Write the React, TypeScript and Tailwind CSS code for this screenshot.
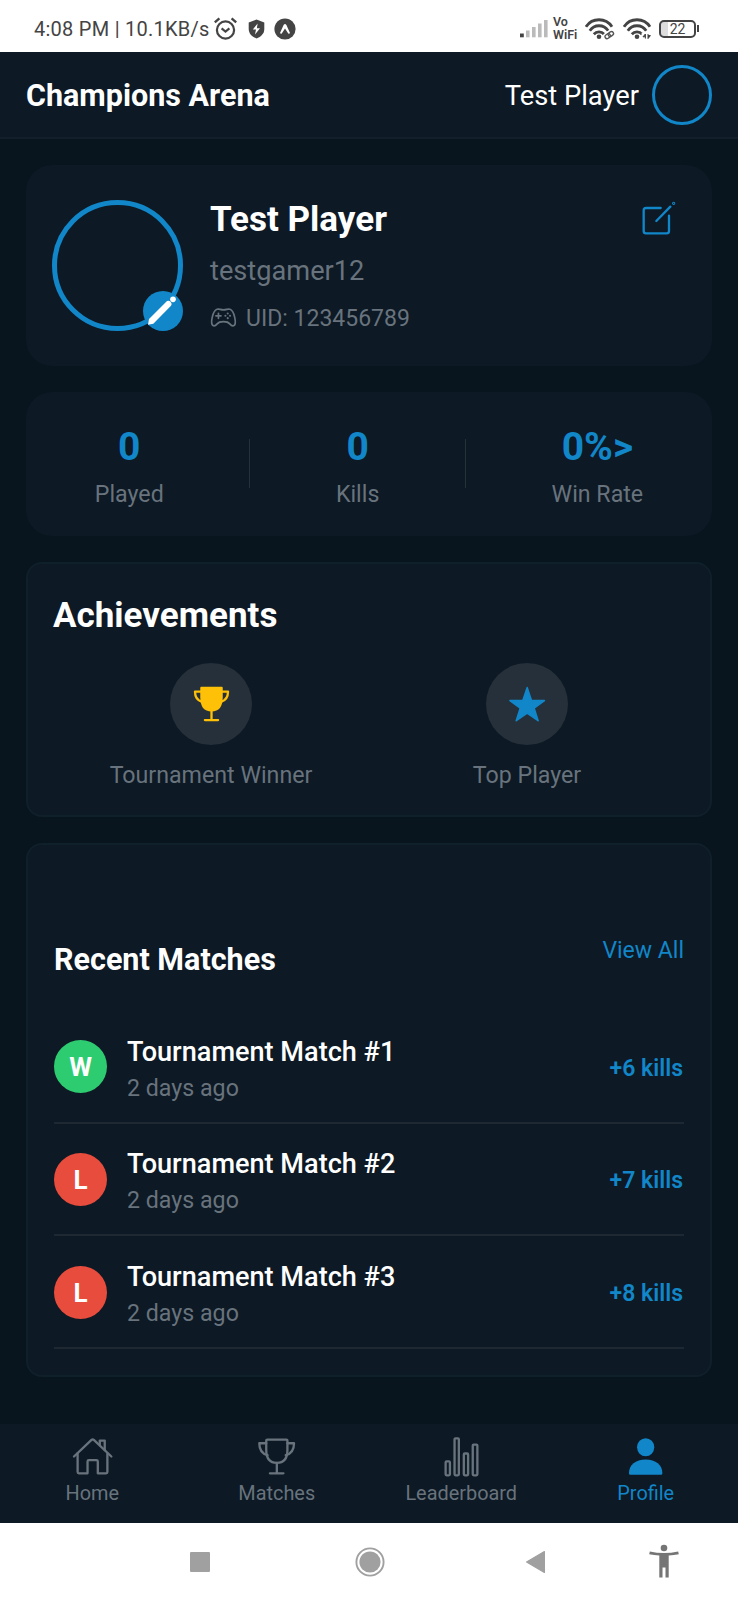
import React from "react";
import { IoGameControllerOutline } from "react-icons/io5";

const matches = [
  { id: 1, won: true, kills: 6 },
  { id: 2, won: false, kills: 7 },
  { id: 3, won: false, kills: 8 },
];

function WifiArcs() {
  return (
    <g>
      <g fill="none" stroke="#444" strokeWidth="2.8">
        <path d="M1 8.8 A15.5 15.5 0 0 1 27 8.8" />
        <path d="M4.8 12.7 A11 11 0 0 1 23.2 12.7" />
        <path d="M8.8 16.2 A7 7 0 0 1 19.2 16.2" />
      </g>
      <circle cx="14" cy="18.8" r="2.3" fill="#444" />
    </g>
  );
}

function StatusBar() {
  return (
    <div className="flex h-[52px] items-center bg-white pt-[5px] pl-[34px] text-[#444]">
      <span className="w-[180px] whitespace-nowrap text-[20px] leading-6 tracking-[0.26px]">
        4:08 PM | 10.1KB/s
      </span>
      <svg className="h-[24px] w-[24px]" viewBox="0 0 24 24" fill="none" stroke="#444" strokeWidth="2.2">
        <circle cx="11.5" cy="13" r="8.6" />
        <path d="M0.8 5.4 L5.4 1.4 M22.2 5.4 L17.6 1.4" strokeWidth="2.4" />
        <path d="M7.6 11.4 L11.5 14.6 L15.4 11.4" />
      </svg>
      <svg className="ml-[10px] h-[20px] w-[17px]" viewBox="0 0 17 20">
        <path d="M8.5 0.6 L16.3 3.4 V10 C16.3 14.6 13 17.8 8.5 19.4 C4 17.8 0.7 14.6 0.7 10 V3.4 Z" fill="#444" />
        <path d="M9.6 4.4 L4.8 10.6 H8 L7 15.6 L12 9.2 H8.9 Z" fill="#fff" />
      </svg>
      <svg className="ml-[9px] h-[22px] w-[22px]" viewBox="0 0 22 22">
        <circle cx="11" cy="11" r="10.6" fill="#444" />
        <path d="M5.9 15.2 L9.6 7 Q11 5 12.4 7 L16.1 15.2 L14.4 15.8 L11 10.4 L7.6 15.8 Z" fill="#fff" />
      </svg>
      <svg className="ml-[223px] h-[20px] w-[30px]" viewBox="0 0 30 20">
        <rect x="1" y="14.5" width="3.8" height="3.8" fill="#444" />
        <rect x="7" y="11.5" width="3.6" height="6.8" fill="#bbb" />
        <rect x="13" y="8" width="3.6" height="10.3" fill="#bbb" />
        <rect x="19" y="4.5" width="3.6" height="13.8" fill="#bbb" />
        <rect x="25" y="1" width="3.6" height="17.3" fill="#bbb" />
      </svg>
      <div className="ml-[4px] flex w-[32px] flex-col gap-[1px] text-[12.5px] leading-[12px] font-semibold">
        <span>Vo</span>
        <span>WiFi</span>
      </div>
      <svg className="h-[22px] w-[30px]" viewBox="0 0 30 22">
        <WifiArcs />
        <rect x="19.2" y="14.6" width="9.6" height="5" rx="2" transform="rotate(-35 24 17)" fill="#fff" stroke="#fff" strokeWidth="3" />
        <g fill="none" stroke="#555" strokeWidth="1.4">
          <rect x="19.5" y="15.2" width="5.6" height="4" rx="2" transform="rotate(-35 24 17)" />
          <rect x="23.3" y="15.2" width="5.6" height="4" rx="2" transform="rotate(-35 24 17)" />
        </g>
      </svg>
      <svg className="ml-[8px] h-[22px] w-[30px]" viewBox="0 0 30 22">
        <WifiArcs />
        <rect x="18.6" y="14.6" width="9" height="8" fill="#fff" />
        <path d="M22.4 20.6 V16 L20 18.8 H22.4 M25 16 V20.6 L27.4 17.6 H25" fill="#444" stroke="#444" strokeWidth="1" />
      </svg>
      <div className="ml-[6px] flex h-[18px] w-[37px] items-center justify-center rounded-[5px] border-2 border-[#444] bg-gradient-to-r from-[#ddd] from-22% to-white to-22% text-[14px] leading-none">
        22
      </div>
      <div className="ml-[1px] h-[7px] w-[2px] bg-[#444]" />
    </div>
  );
}

function PencilIcon() {
  return (
    <svg className="size-full" viewBox="430 423 120 120" fill="#fff">
      <path d="M445 524 L448 507 L502 453 Q507 450 513 455 Q518 461 514 467 L461 521 Z" />
      <circle cx="520" cy="448" r="8.5" />
    </svg>
  );
}

function EditIcon() {
  return (
    <svg
      className="mt-[34px] mr-[8px] size-[38px] self-start"
      viewBox="420 145 114 114"
      fill="none"
      stroke="#1186c8"
      strokeWidth="7"
      strokeLinecap="round"
    >
      <path d="M482 172 H438 Q431 172 431 179 V241 Q431 248 438 248 H500 Q507 248 507 241 V195" />
      <path d="M469 211 L511 168" />
      <circle cx="521" cy="158" r="1.5" />
    </svg>
  );
}

function TrophyBadge() {
  return (
    <svg className="size-[39px]" viewBox="95 88 118 118">
      <path
        d="M123 93 H185 Q188 93 188 97 V125 Q188 168 154 168 Q120 168 120 125 V97 Q120 93 123 93Z"
        fill="#ffc107"
      />
      <path
        d="M121 108 H104 Q104 133 125 139 M187 108 H204 Q204 133 183 139 M154 166 V194 M134 194 H174"
        fill="none"
        stroke="#ffc107"
        strokeWidth="7"
        strokeLinecap="round"
        strokeLinejoin="round"
      />
    </svg>
  );
}

function StarBadge() {
  return (
    <svg className="size-[39px]" viewBox="1041 88 118 118">
      <path
        d="M1099 96 L1112 135 H1151 L1120 158 L1132 196 L1099 173 L1066 196 L1078 158 L1047 135 H1086 Z"
        fill="#1186c8"
        stroke="#1186c8"
        strokeWidth="5"
        strokeLinejoin="round"
      />
    </svg>
  );
}

function OutlineIcon({ viewBox, children }: { viewBox: string; children: React.ReactNode }) {
  return (
    <svg
      className="size-[43px]"
      viewBox={viewBox}
      fill="none"
      stroke="currentColor"
      strokeWidth="7"
      strokeLinecap="round"
      strokeLinejoin="round"
    >
      {children}
    </svg>
  );
}

function HomeIcon() {
  return (
    <OutlineIcon viewBox="211 73 130 130">
      <path d="M220 138 L273 88 Q276.500 85 280 88 L333 138" />
      <path d="M298 104 V90 H313 V119" />
      <path d="M231 129 V185 Q231 189 235 189 H261 V153 Q261 149 265 149 H288 Q292 149 292 153 V189 H317 Q321 189 321 185 V129" />
    </OutlineIcon>
  );
}

function CupIcon() {
  return (
    <OutlineIcon viewBox="764 73 130 130">
      <path d="M801 87 H859 Q862 87 862 90 V118 Q862 157 830 157 Q798 157 798 118 V90 Q798 87 801 87Z" />
      <path d="M798 98 H777 Q777 128 802 134 M862 98 H882 Q882 128 857 134 M830 157 V189 M809 189 H850" />
    </OutlineIcon>
  );
}

function ChartIcon() {
  return (
    <OutlineIcon viewBox="211 73 130 130">
      <rect x="228" y="153" width="13" height="42" rx="3" />
      <rect x="255" y="83" width="13" height="112" rx="3" />
      <rect x="283" y="129" width="13" height="66" rx="3" />
      <rect x="310" y="102" width="14" height="93" rx="3" />
    </OutlineIcon>
  );
}

function PersonIcon() {
  return (
    <svg className="size-[43px]" viewBox="764 73 130 130" fill="currentColor">
      <ellipse cx="829.500" cy="110" rx="26" ry="27.500" />
      <path d="M779 188 C779 164 799 147 829.500 147 C860 147 880 164 880 188 Q880 193 877 193 H782 Q779 193 779 188Z" />
    </svg>
  );
}

function Stat({ value, label }: { value: string; label: string }) {
  return (
    <div className="flex flex-col items-center">
      <span className="text-[39px] leading-[46px] font-bold text-[#1186c8]">{value}</span>
      <span className="mt-[10px] text-[23.2px] leading-[28px] text-[#68737d]">{label}</span>
    </div>
  );
}

function Achievement({ icon, label }: { icon: React.ReactNode; label: string }) {
  return (
    <div className="flex flex-1 flex-col items-center">
      <div className="flex size-[82px] items-center justify-center rounded-full bg-[#25303a]">{icon}</div>
      <span className="mt-[16px] text-[23.2px] leading-[28px] text-[#68737d]">{label}</span>
    </div>
  );
}

function Tab({ icon, label, active = false }: { icon: React.ReactNode; label: string; active?: boolean }) {
  return (
    <div className={active ? "flex flex-1 flex-col items-center text-[#1186c8]" : "flex flex-1 flex-col items-center text-[#68737d]"}>
      {icon}
      <span className="mt-[4px] text-[19.9px] leading-[24px]">{label}</span>
    </div>
  );
}

export default function App() {
  return (
    <div className="flex h-[1600px] w-[738px] flex-col overflow-hidden bg-[#08151f] font-['Roboto',sans-serif]">
      <StatusBar />

      <header className="flex h-[87px] items-center border-b-2 border-[#13202b] bg-[#0d1924] px-[26px] text-white">
        <h1 className="mt-[3px] flex-1 text-[30.5px] leading-[36px] font-bold">Champions Arena</h1>
        <span className="mt-[3px] mr-[13px] text-[27.3px] leading-[34px]">Test Player</span>
        <div className="size-[60px] rounded-full border-3 border-[#1186c8]" />
      </header>

      <main className="flex flex-1 flex-col px-[26px] pt-[26px]">
        <section className="flex h-[201px] items-center rounded-[26px] bg-[#0d1924] px-[26px]">
          <div className="relative size-[131px] rounded-full border-[5px] border-[#1186c8]">
            <div className="absolute -right-[5px] -bottom-[5px] size-[40px] rounded-full bg-[#1186c8]">
              <PencilIcon />
            </div>
          </div>
          <div className="ml-[27px] flex flex-1 flex-col">
            <h2 className="text-[35px] leading-[44px] font-bold text-white">Test Player</h2>
            <span className="mt-[12px] text-[27.2px] leading-[34px] text-[#68737d]">testgamer12</span>
            <div className="mt-[16px] flex items-center text-[#68737d]">
              <IoGameControllerOutline size={27} className="-mt-[2px]" />
              <span className="ml-[9px] text-[23px] leading-[30px]">UID: 123456789</span>
            </div>
          </div>
          <EditIcon />
        </section>

        <section className="mt-[26px] flex h-[144px] justify-around rounded-[26px] bg-[#0d1924] px-[26px] pt-[32px]">
          <Stat value="0" label="Played" />
          <div className="mt-[15px] h-[49px] w-px bg-[#25303a]" />
          <Stat value="0" label="Kills" />
          <div className="mt-[15px] h-[49px] w-px bg-[#25303a]" />
          <Stat value="0%>" label="Win Rate" />
        </section>

        <section className="mt-[26px] h-[255px] rounded-[16px] border-2 border-[#0f202b] bg-[#0d1924] px-[25px] pt-[32px]">
          <h2 className="text-[35px] leading-[40px] font-bold text-white">Achievements</h2>
          <div className="mt-[27px] flex">
            <Achievement icon={<TrophyBadge />} label="Tournament Winner" />
            <Achievement icon={<StarBadge />} label="Top Player" />
          </div>
        </section>

        <section className="mt-[26px] h-[534px] rounded-[16px] border-2 border-[#0f202b] bg-[#0d1924] px-[26px] pt-[92px]">
          <div className="flex items-start justify-between">
            <h2 className="mt-[5px] text-[30.5px] leading-[36px] font-bold text-white">Recent Matches</h2>
            <span className="text-[23px] leading-[28px] text-[#1186c8]">View All</span>
          </div>
          <ul className="mt-[33px]">
            {matches.map((match) => (
              <li key={match.id} className="flex h-[112.67px] items-center border-b-2 border-[#1d2833]">
                <div
                  className={
                    match.won
                      ? "mt-[1px] flex size-[53px] items-center justify-center rounded-full bg-[#2ecc71] pt-[2px] text-[26px] font-bold text-white"
                      : "mt-[1px] flex size-[53px] items-center justify-center rounded-full bg-[#e74c3c] pt-[2px] text-[26px] font-bold text-white"
                  }
                >
                  {match.won ? "W" : "L"}
                </div>
                <div className="ml-[20px] flex flex-1 flex-col pt-[4px]">
                  <span className="text-[27.1px] leading-[34px] font-medium text-white">Tournament Match #{match.id}</span>
                  <span className="mt-[5px] text-[23.2px] leading-[28px] text-[#68737d]">2 days ago</span>
                </div>
                <span className="mr-[1px] pt-[5px] text-[23px] leading-[28px] font-semibold text-[#1186c8]">+{match.kills} kills</span>
              </li>
            ))}
          </ul>
        </section>
      </main>

      <nav className="flex h-[99px] bg-[#0d1924] pt-[11px]">
        <Tab icon={<HomeIcon />} label="Home" />
        <Tab icon={<CupIcon />} label="Matches" />
        <Tab icon={<ChartIcon />} label="Leaderboard" />
        <Tab icon={<PersonIcon />} label="Profile" active />
      </nav>

      <div className="flex h-[77px] items-center bg-white pl-[190px]">
        <div className="size-[20px] rounded-[1px] bg-[#a0a0a0]" />
        <svg className="ml-[145px] size-[30px]" viewBox="0 0 30 30">
          <circle cx="15" cy="15" r="13.6" fill="none" stroke="#a0a0a0" strokeWidth="1.9" />
          <circle cx="15" cy="15" r="10.6" fill="#a0a0a0" />
        </svg>
        <svg className="ml-[140px] h-[24px] w-[21px]" viewBox="0 0 21 24">
          <path d="M19.4 1.6 V22.4 L1.6 12 Z" fill="#a0a0a0" stroke="#a0a0a0" strokeWidth="1.2" strokeLinejoin="round" />
        </svg>
        <svg className="mb-[2px] ml-[103px] h-[34px] w-[30px]" viewBox="0 0 30 34">
          <circle cx="15" cy="4" r="3.3" fill="#757575" />
          <path d="M0.8 7.4 Q15 10.400 29.2 7.4 L29.8 10.2 Q25 11.2 19.700 11.6 V33.600 H16.500 V23.400 H13.500 V33.600 H10.300 V11.6 Q5 11.2 0.2 10.2 Z" fill="#757575" />
        </svg>
      </div>
    </div>
  );
}
